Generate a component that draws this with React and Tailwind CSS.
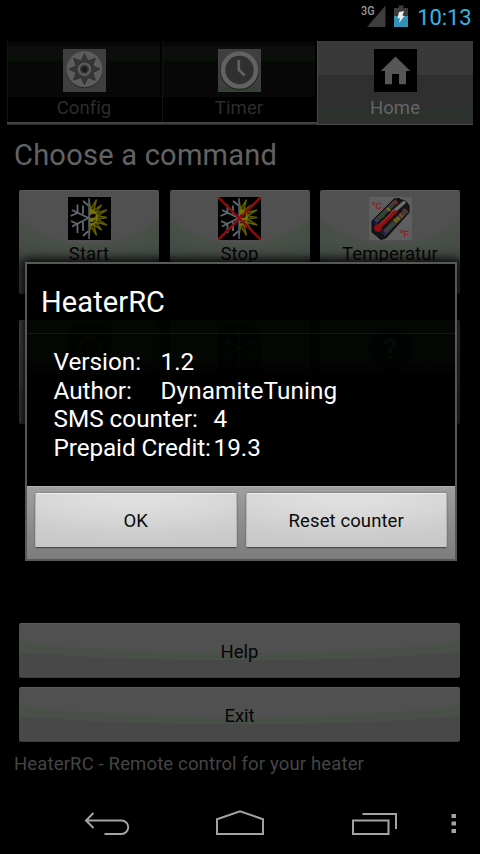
const FONT = "font-['Roboto',sans-serif]";

function GearIcon() {
  const points = [];
  for (let i = 0; i < 16; i++) {
    const r = i % 2 === 0 ? 15.5 : 9;
    const a = (i * Math.PI) / 8;
    points.push(`${(21.5 + r * Math.sin(a)).toFixed(2)},${(20.2 - r * Math.cos(a)).toFixed(2)}`);
  }
  return (
    <svg className="h-[43px] w-[43px] shrink-0" viewBox="0 0 43 43">
      <rect width="43" height="43" fill="#3f3f3f" />
      <circle cx="21.5" cy="21" r="18" fill="#242424" />
      <circle cx="21.5" cy="20.2" r="18" fill="#5c5c5c" />
      <polygon points={points.join(" ")} fill="#363636" stroke="#2c2c2c" strokeWidth="0.8" />
      <circle cx="21.5" cy="20.2" r="5.6" fill="#363636" stroke="#5c5c5c" strokeWidth="2.2" />
      <circle cx="21.5" cy="20.2" r="2.8" fill="#1c1c1c" />
    </svg>
  );
}

function ClockIcon() {
  return (
    <svg className="h-[43px] w-[43px] shrink-0" viewBox="0 0 43 43">
      <rect width="43" height="43" fill="#3f3f3f" />
      <rect y="38" width="43" height="4" fill="#354035" />
      <circle cx="21.5" cy="21.8" r="17" fill="none" stroke="#262626" strokeWidth="5" />
      <circle cx="21.5" cy="21" r="16.5" fill="#303030" stroke="#626262" strokeWidth="4.6" />
      <path d="M20.8 11v10l6 5.5" fill="none" stroke="#626262" strokeWidth="2.8" />
    </svg>
  );
}

function HomeIcon() {
  return (
    <svg className="h-[43px] w-[43px] shrink-0" viewBox="0 0 43 43">
      <rect width="43" height="43" fill="#000" />
      <path d="M21.5 7.5 36.3 22h-4.3v13.3h-7V25h-7v10.3h-7V22H6.7z" fill="#565656" />
    </svg>
  );
}

function SnowSun({ crossed }) {
  const rays = [];
  for (let i = 0; i <= 8; i++) {
    const a = (i * Math.PI) / 8;
    const r = i % 2 === 0 ? 18 : 19.5;
    const p = (rr, aa) => `${(21 + rr * Math.sin(aa)).toFixed(1)} ${(20.5 - rr * Math.cos(aa)).toFixed(1)}`;
    rays.push(`M${p(8, a - 0.24)}L${p(r, a)}L${p(8, a + 0.24)}Z`);
  }
  return (
    <svg className="h-[43px] w-[43px] shrink-0" viewBox="0 0 43 43">
      <rect width="43" height="43" fill="#000" />
      <svg x="21" y="0" width="22" height="43" viewBox="21 0 22 43">
        <path d={rays.join("")} fill="#2c2a00" stroke="#625f00" strokeWidth="1.3" />
        <circle cx="21" cy="20.5" r="9" fill="#777300" />
        <path d="M22 18.5q2-3 6-1l-1 3-5 .5z" fill="#08080c" />
        <path d="M21.5 25.5q4 1 6-2.5" fill="none" stroke="#1d1c00" strokeWidth="1.2" />
      </svg>
      <path
        d="M20.500 21 4 13M9.500 7.500v8.500l-7 3M15 8.500v8.500M20.500 21 4 29.500M9.500 36v-9l-6.500-3M15 34v-9M15 4l5.500 4.500M15 39l5.500-5"
        fill="none"
        stroke="#606a70"
        strokeWidth="1.8"
      />
      <path d="M21 1v41" stroke="#55617a" strokeWidth="1.5" />
      {crossed && <path d="M0 0 43 43M43 0 0 43" stroke="#821010" strokeWidth="2.6" />}
    </svg>
  );
}

function SunIcon() {
  const rays = [];
  for (let i = 0; i < 16; i++) {
    const a = (i * Math.PI) / 8;
    const p = (rr, aa) => `${(21.5 + rr * Math.sin(aa)).toFixed(1)} ${(21.5 - rr * Math.cos(aa)).toFixed(1)}`;
    rays.push(`M${p(8, a - 0.2)}L${p(14, a)}L${p(8, a + 0.2)}`);
  }
  return (
    <svg className="h-[43px] w-[43px] shrink-0" viewBox="0 0 43 43" fill="none" stroke="#777300" strokeWidth="1.2">
      <rect width="43" height="43" fill="#000" stroke="none" />
      <path d={rays.join("")} />
      <path d="M17 19h3M23 19h3M17 24q4.500 4 9 0" />
    </svg>
  );
}

function SnowIcon() {
  return (
    <svg className="h-[43px] w-[43px] shrink-0" viewBox="0 0 43 43" fill="none" stroke="#667078" strokeWidth="1.2">
      <rect width="43" height="43" fill="#000" stroke="none" />
      <path d="M21.500 2v39M5 12l33 19M5 31l33-19M16 4l5.500 5 5.500-5M16 39l5.500-5 5.500 5M10 7v8l-7 3M33 7v8l7 3M10 36v-8l-7-3M33 36v-8l7-3" />
    </svg>
  );
}

function ThermoIcon() {
  return (
    <svg className="h-[43px] w-[43px] shrink-0" viewBox="0 0 43 43">
      <rect width="43" height="43" fill="#5e5e5e" />
      <path d="M3 24 25 2l5-.5 2 1.500 4 .5 4 5v7L17 41l-5 1.500L3 35z" fill="#151515" stroke="#0b0b0b" />
      <path d="M6 25 25 6l3-2" stroke="#3c3c3c" strokeWidth="4.500" fill="none" />
      <path d="M14 37 38 13" stroke="#3c3c3c" strokeWidth="5" fill="none" />
      <path d="M24 15 35 5.500" stroke="#6d6d6d" strokeWidth="3.600" strokeLinecap="round" />
      <path d="M9 31 27 13.500" stroke="#901010" strokeWidth="4.200" />
      <path d="M10 28 27 11.500" stroke="#a04545" strokeWidth="0.800" />
      <circle cx="9" cy="31" r="3.800" fill="#901010" />
      <path d="m5 24 3 3M13 34l3 3" stroke="#17176a" strokeWidth="2" />
      <path d="m12 17 3 3M20 28l3 3" stroke="#145c25" strokeWidth="2" />
      <path d="m18 11 3 3M25 22l3 3M27.500 20l3 3" stroke="#777214" strokeWidth="2" />
      <path d="m25 4 3 3M34 12l3 3" stroke="#872020" strokeWidth="2" />
      <path d="m30.500 17 3 3" stroke="#8a4a12" strokeWidth="2" />
      <text x="3" y="11.500" fontSize="9" fill="#8a2020" stroke="#8a2020" strokeWidth="0.3" fontFamily="Liberation Sans, sans-serif">°C</text>
      <text x="31" y="40" fontSize="9" fill="#8a2020" stroke="#8a2020" strokeWidth="0.3" fontFamily="Liberation Sans, sans-serif">°F</text>
    </svg>
  );
}

function QuestionIcon() {
  return (
    <div className="h-[43px] w-[43px] shrink-0 rounded-full bg-black p-[3px]">
      <div className="flex h-full w-full items-center justify-center rounded-full border border-[#2c3cb0] text-[30px] font-medium leading-none text-[#b0b0b0]">
        ?
      </div>
    </div>
  );
}

function Tab({ icon, label }) {
  return (
    <div className="flex h-[81px] w-[153px] flex-col items-center border-l border-[#101310] bg-[linear-gradient(#060606_0_5px,#0d0d0d_5px_12px,#081008_12px_20px,#080808_20px_56px,#000_56px)] pt-2">
      {icon}
      <span className="mt-1 text-[18.5px] leading-6 tracking-[0.1px] text-[#2d2d2d]">{label}</span>
    </div>
  );
}

function Card({ icon, label }) {
  return (
    <div className="flex h-[104px] flex-1 flex-col items-center rounded-[2px] border-t border-[#5a5a5a] bg-[radial-gradient(ellipse_110%_100%_at_50%_0%,#505050_50%,#495048_52%,#444b44_78%,#3d3f3d_82%)] pt-[6px]">
      {icon}
      <span className="mt-[2px] text-[18.5px] leading-6 tracking-[0.1px] text-[#050505]">{label}</span>
    </div>
  );
}

function WideButton({ children }) {
  return (
    <div className="flex h-[55px] items-center justify-center rounded-[2px] border-t border-b border-t-[#5c5c5c] border-b-[#3c3c3c] bg-[radial-gradient(ellipse_116%_100%_at_50%_0%,#505050_54%,#495048_55%_68%,#484848_69%)] pt-[4px] text-[18.5px] text-[#050505]">
      {children}
    </div>
  );
}

function DialogButton({ children }) {
  return (
    <div className="flex h-[55px] flex-1 items-center justify-center rounded-[2px] border border-t-[#eee] border-r-[#b5b5b5] border-b-[#4a4a4a] border-l-[#b5b5b5] bg-[radial-gradient(ellipse_110%_100%_at_50%_0%,#dfdfdf_15%,#d6d6d6_50%,#cdcdcd_75%,#c8c8c8)] pt-[3px] text-[18.5px] tracking-[0.1px] text-[#0a0a0a] shadow-[0_0_2px_#555]">
      {children}
    </div>
  );
}

function StatusBar() {
  return (
    <div className="flex h-[41px] items-start justify-end pr-[8.5px]">
      <svg className="h-[38px] w-[52px]" viewBox="0 0 52 38">
        <path d="M7 27h18.500V5.500z" fill="#3d3d3d" />
        <text x="1" y="15" fontSize="12" fontWeight="500" fill="#9a9a9a" fontFamily="Roboto, sans-serif" textLength="13.500" lengthAdjust="spacingAndGlyphs">3G</text>
        <path d="M38.500 5.500h5v2.500h4.500v8H34V8h4.500z" fill="#3c3c3c" />
        <path d="M34 16h14v11H34z" fill="#3292b5" />
        <path d="m39 12 5-1-1.500 4.500 2 .5-5.500 7 1-5-2.500.500z" fill="#e4eef2" />
      </svg>
      <span className="ml-[5px] mt-[4px] text-[22px] leading-[27px] tracking-[-0.1px] text-[#33b5e5]">10:13</span>
    </div>
  );
}

function NavBar() {
  return (
    <div className="mt-auto h-[59px]">
      <svg className="h-[59px] w-[480px]" viewBox="0 795 480 59" fill="none" stroke="#a3a3a3" strokeWidth="2">
        <path d="M93.500 813 86 820.500l7.500 7.500M87 820.500h34.500a6.700 6.700 0 0 1 0 13.500H104.500" />
        <path d="M217 834v-14.800l23-8 23 8V834z" />
        <path d="M353 820.500h35.500V834H353zM362.500 814H396v15" />
        <path d="M451.500 814h4.500v4h-4.500zM451.500 821.500h4.500v4h-4.500zM451.500 829h4.500v4h-4.500z" fill="#a3a3a3" stroke="none" />
      </svg>
    </div>
  );
}

function Dialog() {
  return (
    <div className="absolute left-[25px] top-[262px] flex h-[299px] w-[432px] flex-col border-2 border-[#585858] text-white shadow-[0_0_10px_3px_#000]">
      <div className="h-[69px] bg-[linear-gradient(#000_56px,rgba(0,3,0,0.96)_56px)] pl-[14px] pt-[21px] text-[29px] leading-[34px] tracking-[0.1px]">
        HeaterRC
      </div>
      <div className="flex flex-1 flex-col border-t border-[#141714] bg-[linear-gradient(rgba(0,3,0,0.96)_26px,#000_42px)] pl-[26.5px] pt-[14px] text-[24.3px] leading-[28.5px]">
        <div className="flex"><span className="w-[107px]">Version:</span><span>1.2</span></div>
        <div className="flex"><span className="w-[107px]">Author:</span><span className="tracking-[0.1px]">DynamiteTuning</span></div>
        <div className="flex"><span className="w-[160px]">SMS counter:</span><span>4</span></div>
        <div className="flex"><span className="w-[160px] whitespace-nowrap tracking-[-0.1px]">Prepaid Credit:</span><span>19.3</span></div>
      </div>
      <div className="flex h-[73px] gap-[9px] border-t border-[#b0b0b0] bg-[linear-gradient(#9f9f9f,#7c7c7c)] px-2 pt-[6px]">
        <DialogButton>OK</DialogButton>
        <DialogButton>Reset counter</DialogButton>
      </div>
    </div>
  );
}

export default function App() {
  return (
    <div className={`relative flex h-[854px] w-[480px] flex-col overflow-hidden bg-black ${FONT}`}>
      <StatusBar />
      <div className="ml-[7px] flex h-[85px] w-[466px]">
        <div className="flex w-[310px] flex-col">
          <div className="flex gap-[2px]">
            <Tab icon={<GearIcon />} label="Config" />
            <Tab icon={<ClockIcon />} label="Timer" />
          </div>
          <div className="h-[3px] border-t-2 border-b border-t-[#424242] border-b-[#292929]" />
        </div>
        <div className="flex h-[84px] flex-1 flex-col items-center border-b border-l border-[#484848] bg-[linear-gradient(#393939_0_34px,#2f2f2f_34px_67px,#2b322b_67px_77px,#303030_77px)] pt-2 pr-[1px]">
          <HomeIcon />
          <span className="mt-1 text-[18.5px] leading-6 tracking-[0.1px] text-[#666]">Home</span>
        </div>
      </div>
      <h1 className="mt-[10px] h-[38px] pl-[14px] text-[29px] leading-[38px] tracking-[0.25px] text-[#636363]">Choose a command</h1>
      <div className="ml-[19px] mr-5 mt-4 flex gap-[10.5px]">
        <Card icon={<SnowSun />} label="Start" />
        <Card icon={<SnowSun crossed />} label="Stop" />
        <Card icon={<ThermoIcon />} label="Temperatur" />
      </div>
      <div className="ml-[19px] mr-5 mt-[26px] flex gap-[10.5px]">
        <Card icon={<SunIcon />} label="" />
        <Card icon={<SnowIcon />} label="" />
        <Card icon={<QuestionIcon />} label="" />
      </div>
      <div className="ml-[19px] mr-5 mt-[199px] flex flex-col gap-[9px]">
        <WideButton>Help</WideButton>
        <WideButton>Exit</WideButton>
      </div>
      <p className="mt-[10px] pl-[14px] text-[18.5px] leading-6 tracking-[0.15px] text-[#454545]">HeaterRC - Remote control for your heater</p>
      <NavBar />
      <Dialog />
    </div>
  );
}
